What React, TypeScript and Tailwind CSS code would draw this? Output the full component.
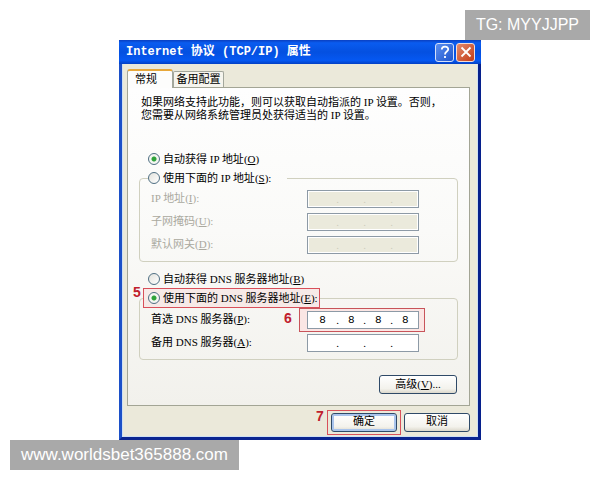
import { useState } from 'react';

type Segments = [string, string, string, string];

const EMPTY: Segments = ['', '', '', ''];

// Latin runs are set in a narrower face than the Chinese glyphs around them
function Mixed({
  text,
  hotkey,
  latin = "font-['Liberation_Serif']",
}: {
  text: string;
  hotkey?: string;
  latin?: string;
}) {
  const parts = text.split(/([\x20-\x7e]+)/).filter(Boolean);
  return (
    <span className="whitespace-pre">
      {parts.map((part, index) =>
        /^[\x20-\x7e]/.test(part) ? (
          <span key={index} className={latin}>
            {part}
          </span>
        ) : (
          part
        )
      )}
      {hotkey && (
        <span className={latin}>
          (<u>{hotkey}</u>)
        </span>
      )}
    </span>
  );
}

function Radio({
  name,
  text,
  hotkey,
  suffix,
  checked,
  onChange,
}: {
  name: string;
  text: string;
  hotkey: string;
  suffix?: string;
  checked: boolean;
  onChange: () => void;
}) {
  return (
    <label className="flex h-[14px] items-center gap-[3px] leading-[14px]">
      <input
        type="radio"
        name={name}
        checked={checked}
        onChange={onChange}
        className="size-3 shrink-0 appearance-none rounded-full border border-[#4f6f83] bg-[linear-gradient(135deg,#e2e2dc,#ffffff)] checked:bg-[radial-gradient(circle,#2fa33b_0_2px,#f4f6f2_3px)]"
      />
      <span>
        <Mixed text={text} hotkey={hotkey} />
        {suffix && <Mixed text={suffix} />}
      </span>
    </label>
  );
}

function AddressRow({
  id,
  text,
  hotkey,
  value,
  onChange,
  disabled,
  marked,
}: {
  id: string;
  text: string;
  hotkey: string;
  value: Segments;
  onChange?: (value: Segments) => void;
  disabled?: boolean;
  marked?: boolean;
}) {
  return (
    <div className="flex h-[18px] items-center justify-between">
      <label htmlFor={`${id}-0`} className={disabled ? 'text-[#aaa99f]' : ''}>
        <Mixed text={text} hotkey={hotkey} />
        <Mixed text=":" />
      </label>
      <div
        className={
          marked ? 'relative -my-1 -mr-[6px] -ml-2 border border-[#c8545a] bg-[#fbe6e4] py-[2px] pr-[5px] pl-[7px]' : ''
        }
      >
        {marked && <Step className="top-px -left-4">6</Step>}
        <div
          className={`flex h-[18px] w-28 items-center border border-[#8d9aa6] px-px ${
            disabled ? 'bg-[#ebeadc] shadow-[inset_0_0_0_1px_#ffffff]' : 'bg-white'
          }`}
        >
          {value.map((segment, index) => (
            <div key={index} className="flex min-w-0 flex-1 items-center">
              {index > 0 && (
                <span className={`w-1 text-center font-['Liberation_Serif'] ${disabled ? 'text-[#cfcdbd]' : ''}`}>
                  .
                </span>
              )}
              <input
                id={`${id}-${index}`}
                aria-label={`${text} ${index + 1}`}
                type="text"
                maxLength={3}
                disabled={disabled}
                value={segment}
                onChange={(e) => {
                  const next = [...value] as Segments;
                  next[index] = e.target.value;
                  onChange?.(next);
                }}
                className="h-4 w-full min-w-0 bg-transparent text-center text-[11px] outline-none"
              />
            </div>
          ))}
        </div>
      </div>
    </div>
  );
}

function Step({ className, children }: { className: string; children: string }) {
  return (
    <span
      className={`pointer-events-none absolute font-['Liberation_Sans'] text-sm leading-4 font-bold text-[#c0202c] ${className}`}
    >
      {children}
    </span>
  );
}

const buttonStyle =
  'h-[19px] rounded-[3px] border border-[#2f4a68] bg-[linear-gradient(#ffffff,#f3f2ec_75%,#dcd8cc)] text-center leading-[17px]';

export default function App() {
  const [autoIp, setAutoIp] = useState(true);
  const [autoDns, setAutoDns] = useState(false);
  const [preferred, setPreferred] = useState<Segments>(['8', '8', '8', '8']);
  const [alternate, setAlternate] = useState<Segments>(EMPTY);

  return (
    <main className="min-h-screen bg-white px-[10px] py-[10px] font-['Liberation_Mono','Noto_Sans_CJK_SC',monospace] text-[11px] text-black">
      <div className="flex justify-end">
        <span className="bg-[#a9a9a9] px-[11px] font-['Liberation_Sans',sans-serif] text-base leading-[30px] text-white">
          TG: MYYJJPP
        </span>
      </div>

      <section className="mx-auto max-w-[362px] border-x-[3px] border-b-[3px] border-r-[#06208c] border-b-[#0b2590] border-l-[#1c50c8] bg-[#ebe9da]">
        {/* Title bar */}
        <header className="-mx-[3px] flex h-6 items-center justify-between bg-[linear-gradient(#0a3fc0,#0a5cf0_12%,#0450e0_50%,#0558f2_85%,#0340c4)] pr-[6px] pl-[7px]">
          <h1 className="text-[12px] leading-5 font-bold text-white">
            <Mixed text="Internet 协议 (TCP/IP) 属性" latin="text-[12px]" />
          </h1>
          <div className="flex gap-[2px]">
            <button
              aria-label="帮助"
              className="flex size-[19px] items-center justify-center rounded-[3px] border border-[#d4e0fa] bg-[linear-gradient(135deg,#5b8ff0,#1f55cc)]"
            >
              <svg viewBox="0 0 16 16" className="size-4" fill="none" stroke="#fff" strokeWidth="1.8">
                <path d="M4.8 5.6C4.8 1.6 11.2 1.6 11.2 5.3C11.2 7.6 8 7.5 8 10.4" />
                <path d="M8 12v2" />
              </svg>
            </button>
            <button
              aria-label="关闭"
              className="flex size-[19px] items-center justify-center rounded-[3px] border border-[#f4dcd6] bg-[linear-gradient(135deg,#e48a6c,#c23c17)]"
            >
              <svg viewBox="0 0 16 16" className="size-4" fill="none" stroke="#fff" strokeWidth="1.8">
                <path d="M3.5 3.5l9 9M12.5 3.5l-9 9" />
              </svg>
            </button>
          </div>
        </header>

        <div className="border-x border-b border-[#cfe0f2] pt-[5px] pr-[7px] pb-px pl-[4px]">
          {/* Tabs */}
          <div role="tablist" className="flex items-end">
            <button
              role="tab"
              aria-selected="true"
              className="relative z-10 -mb-px h-[19px] w-[46px] rounded-t-[3px] border border-t-2 border-b-0 border-[#a3a79c] border-t-[#e8a83a] bg-[#fdfdfc] pr-2 leading-4"
            >
              常规
            </button>
            <button
              role="tab"
              aria-selected="false"
              className="h-4 w-[51px] rounded-t-[2px] border border-b-0 border-[#a3a79c] bg-[#f6f5ee] leading-4"
            >
              备用配置
            </button>
          </div>

          {/* Panel */}
          <div className="border border-[#a3a595] bg-[linear-gradient(#fefefe,#fafaf8_45%,#f2f1ec)] px-[11px] pt-[8px] pb-[11px]">
            <div className="px-[2px] leading-[13px] whitespace-nowrap">
              <p className="h-[13px]">
                <Mixed text="如果网络支持此功能，则可以获取自动指派的 IP 设置。否则，" />
              </p>
              <p className="h-[13px]">
                <Mixed text="您需要从网络系统管理员处获得适当的 IP 设置。" />
              </p>
            </div>

            <div className="mt-[30px] pl-[9px]">
              <Radio name="ip" text="自动获得 IP 地址" hotkey="O" checked={autoIp} onChange={() => setAutoIp(true)} />
            </div>
            <fieldset className="mt-[5px] rounded-[4px] border border-[#d0d0bf] pt-[5px] pr-[38px] pb-[7px] pl-[11px]">
              <legend className="-ml-[3px] pr-4">
                <Radio
                  name="ip"
                  text="使用下面的 IP 地址"
                  hotkey="S"
                  suffix=":"
                  checked={!autoIp}
                  onChange={() => setAutoIp(false)}
                />
              </legend>
              <div className="flex flex-col gap-[5px]">
                <AddressRow id="address" text="IP 地址" hotkey="I" value={EMPTY} disabled />
                <AddressRow id="mask" text="子网掩码" hotkey="U" value={EMPTY} disabled />
                <AddressRow id="gateway" text="默认网关" hotkey="D" value={EMPTY} disabled />
              </div>
            </fieldset>

            <div className="mt-[10px] pl-[9px]">
              <Radio
                name="dns"
                text="自动获得 DNS 服务器地址"
                hotkey="B"
                checked={autoDns}
                onChange={() => setAutoDns(true)}
              />
            </div>
            <fieldset className="mt-[2px] rounded-[4px] border border-[#d0d0bf] pt-[3px] pr-[38px] pb-[7px] pl-[11px]">
              <legend className="relative -ml-[8px] border border-[#d8505a] bg-[#ff0000]/5 py-[2px] pr-px pl-1">
                <Step className="-top-[5px] -left-[11px]">5</Step>
                <Radio
                  name="dns"
                  text="使用下面的 DNS 服务器地址"
                  hotkey="E"
                  suffix=":"
                  checked={!autoDns}
                  onChange={() => setAutoDns(false)}
                />
              </legend>
              <div className="flex flex-col gap-[5px]">
                <AddressRow
                  id="preferred"
                  text="首选 DNS 服务器"
                  hotkey="P"
                  value={preferred}
                  onChange={setPreferred}
                  marked
                />
                <AddressRow id="alternate" text="备用 DNS 服务器" hotkey="A" value={alternate} onChange={setAlternate} />
              </div>
            </fieldset>

            <div className="mt-[15px] flex justify-end pr-px">
              <button className={`w-[78px] ${buttonStyle}`}>
                <Mixed text="高级" hotkey="V" />
                <Mixed text="..." />
              </button>
            </div>
          </div>

          {/* Dialog actions */}
          <div className="mt-[4px] flex items-center justify-end gap-[3px]">
            <div className="relative border border-[#d8505a] px-[3px] py-[2px]">
              <Step className="-top-[3px] -left-3">7</Step>
              <button className={`w-[66px] shadow-[inset_0_0_0_2px_#a9c4ec] ${buttonStyle}`}>确定</button>
            </div>
            <button className={`w-[66px] ${buttonStyle}`}>取消</button>
          </div>
        </div>
      </section>

      <footer className="flex">
        <span className="bg-[#a9a9a9] px-[11px] font-['Liberation_Sans',sans-serif] text-[17px] leading-[30px] text-white">
          www.worldsbet365888.com
        </span>
      </footer>
    </main>
  );
}
